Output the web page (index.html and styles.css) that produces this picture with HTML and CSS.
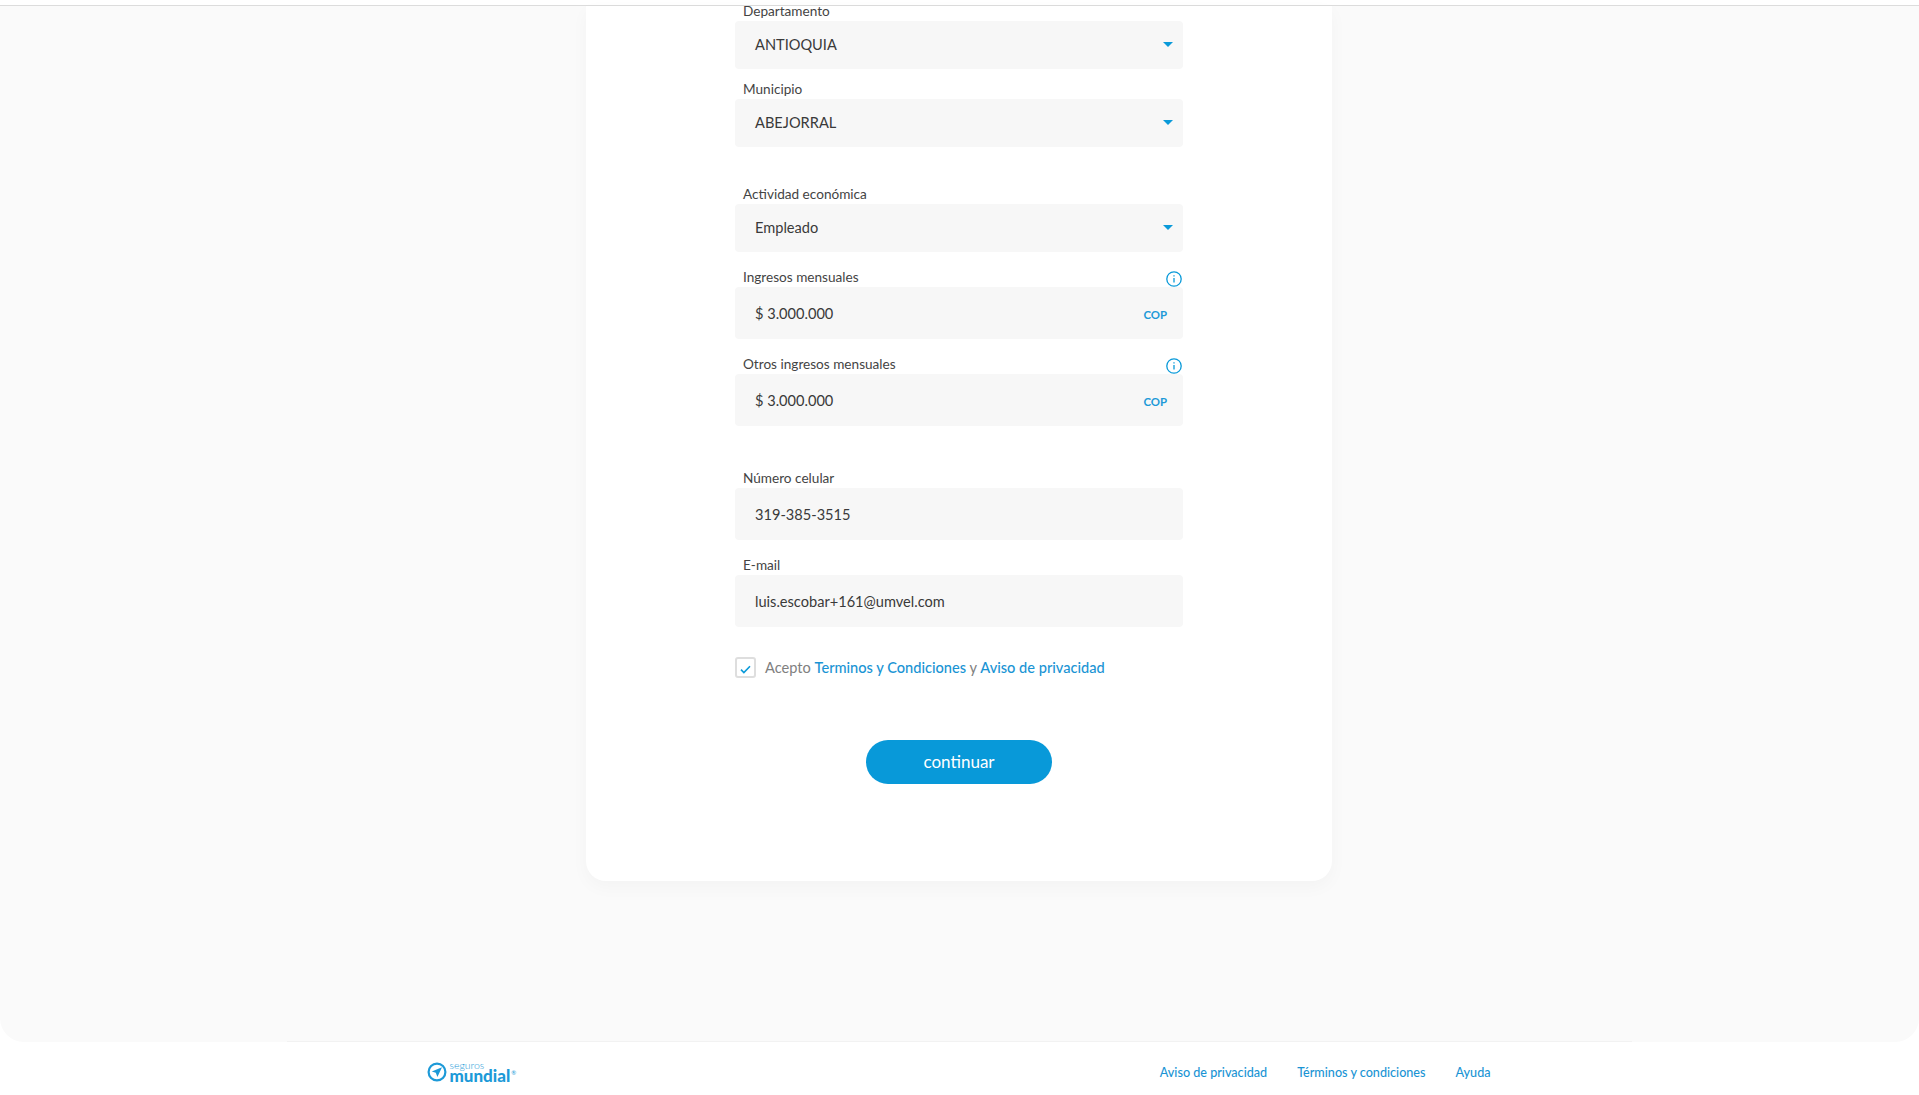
FILE: index.html
```html
<!DOCTYPE html>
<html lang="es">
<head>
<meta charset="utf-8">
<title>Seguros Mundial</title>
<link rel="stylesheet" href="styles.css">
</head>
<body>
<div class="topbar"></div>
<main class="main">
  <form class="card">
    <div class="group group-first">
      <div class="label-row"><label>Departamento</label></div>
      <div class="field field-select"><span>ANTIOQUIA</span><i class="caret"></i></div>
    </div>
    <div class="group group-near">
      <div class="label-row"><label>Municipio</label></div>
      <div class="field field-select"><span>ABEJORRAL</span><i class="caret"></i></div>
    </div>
    <div class="group group-section">
      <div class="label-row"><label>Actividad económica</label></div>
      <div class="field field-select"><span>Empleado</span><i class="caret"></i></div>
    </div>
    <div class="group">
      <div class="label-row"><label>Ingresos mensuales</label>
        <svg class="info" viewBox="0 0 16 16"><circle cx="8" cy="8" r="7.2"/><path d="M8 7v4.6M8 4.2v1.4"/></svg></div>
      <div class="field field-tall"><span>$ 3.000.000</span><b class="cop">COP</b></div>
    </div>
    <div class="group">
      <div class="label-row"><label>Otros ingresos mensuales</label>
        <svg class="info" viewBox="0 0 16 16"><circle cx="8" cy="8" r="7.2"/><path d="M8 7v4.6M8 4.2v1.4"/></svg></div>
      <div class="field field-tall"><span>$ 3.000.000</span><b class="cop">COP</b></div>
    </div>
    <div class="group group-section2">
      <div class="label-row"><label>Número celular</label></div>
      <div class="field field-tall"><span>319-385-3515</span></div>
    </div>
    <div class="group">
      <div class="label-row"><label>E-mail</label></div>
      <div class="field field-tall"><span>luis.escobar+161@umvel.com</span></div>
    </div>
    <div class="terms">
      <span class="checkbox"><svg viewBox="0 0 12 10"><path d="M1 5.2l3.2 3.3L11 1.4"/></svg></span>
      <p>Acepto <a href="#">Terminos y Condiciones</a> y <a href="#">Aviso de privacidad</a></p>
    </div>
    <button class="btn" type="button">continuar</button>
  </form>
</main>
<div class="footer-rule"></div>
<footer class="footer">
  <div class="footer-inner">
    <div class="logo">
      <svg class="logo-mark" viewBox="0 0 20 20"><circle cx="10" cy="10" r="8.4"/><path class="logo-arrow" d="M15 5.2L4.8 9.4l4 1.4 1.6 4.2z"/></svg>
      <div class="logo-text"><span class="seguros">seguros</span><span class="mundial">mundial<sup>®</sup></span></div>
    </div>
    <nav class="links">
      <a href="#">Aviso de privacidad</a>
      <a href="#">Términos y condiciones</a>
      <a href="#">Ayuda</a>
    </nav>
  </div>
</footer>
</body>
</html>
```
FILE: styles.css
```css
* { box-sizing: border-box; }
html, body { margin: 0; height: 100%; }
body {
  background: #fff;
  font-family: "Lato", "Noto Sans", sans-serif;
  color: #333;
  overflow: hidden;
}
.topbar {
  height: 6px;
  background: #fff;
  border-bottom: 1px solid #dcdcdc;
}
.main {
  height: 1036px;
  padding-right: 1px;
  background: #fafafa;
  border-radius: 0 0 24px 24px;
  display: flex;
  justify-content: center;
  align-items: flex-start;
}
.card {
  width: 746px;
  height: 875px;
  background: #fff;
  border-radius: 0 0 20px 20px;
  box-shadow: 0 6px 18px rgba(0,0,0,.03);
  padding: 0 149px;
  display: flex;
  flex-direction: column;
}
.group { margin-top: 17px; }
.group-first { margin-top: -3px; }
.group-near { margin-top: 12px; }
.group-section { margin-top: 39px; }
.group-section2 { margin-top: 44px; }
.label-row {
  height: 18px;
  padding: 1px 0 0 8px;
  display: flex;
  justify-content: space-between;
  align-items: flex-start;
  position: relative;
}
.label-row label {
  font-size: 13.6px;
  line-height: 15px;
  color: #444;
}
.info {
  width: 16px;
  height: 16px;
  margin: 1px 1px 0 0;
  fill: none;
  stroke: #0a9ad9;
  stroke-width: 1.3;
  flex: none;
}
.field {
  height: 48px;
  background: #f7f7f7;
  border-radius: 4px;
  padding: 0 16px 0 20px;
  display: flex;
  align-items: center;
  justify-content: space-between;
  font-size: 14.6px;
  color: #3a3a3a;
}
.field-tall { height: 52px; }
.field-select { padding: 0 10px 1px 20px; }
.caret {
  width: 0;
  height: 0;
  border-left: 5px solid transparent;
  border-right: 5px solid transparent;
  border-top: 5px solid #0a9ad9;
  margin-top: -1px;
}
.cop {
  font-size: 11.4px;
  color: #1d9ad8;
  font-weight: 700;
  margin-top: 2px;
}
.terms {
  display: flex;
  align-items: center;
  gap: 9px;
  margin-top: 30px;
  height: 21px;
}
.checkbox {
  width: 21px;
  height: 21px;
  border: 2px solid #dedede;
  border-radius: 3px;
  display: flex;
  align-items: center;
  justify-content: center;
}
.checkbox svg {
  width: 11px;
  height: 9px;
  margin-top: 3px;
  fill: none;
  stroke: #0a9ad9;
  stroke-width: 1.8;
}
.terms p {
  margin: 0;
  font-size: 14.6px;
  color: #808080;
}
.terms a { color: #1a94d4; text-decoration: none; font-weight: 500; }
.btn {
  align-self: center;
  margin-top: 62px;
  width: 186px;
  height: 44px;
  padding: 0 0 2px;
  border: 0;
  border-radius: 22px;
  background: #0899d9;
  color: #fff;
  font: 17px "Lato", sans-serif;
}
.footer-rule {
  height: 1px;
  margin: -1px 287px 0;
  background: #f2f2f2;
  position: relative;
}
.footer {
  height: 53px;
  background: #fff;
  display: flex;
  justify-content: center;
}
.footer-inner {
  width: 1066px;
  padding: 8px 2px 0 0;
  display: flex;
  align-items: center;
  justify-content: space-between;
}
.logo { display: flex; align-items: center; gap: 3px; margin-top: -2px; }
.logo-mark { width: 20px; height: 20px; fill: none; stroke: #1d9ad8; stroke-width: 2.2; }
.logo-arrow { fill: #1d9ad8; stroke: none; }
.logo-text { display: flex; flex-direction: column; color: #1d9ad8; }
.seguros { font-size: 10.5px; line-height: 8px; font-weight: 300; }
.mundial { font-size: 17px; line-height: 13px; font-weight: 900; white-space: nowrap; }
.mundial sup { font-size: 6px; font-weight: 400; vertical-align: 7px; line-height: 0; margin-left: 1px; }
.links { display: flex; gap: 30px; }
.links a { font-size: 12.6px; color: #1a94d4; text-decoration: none; font-weight: 500; }
```
